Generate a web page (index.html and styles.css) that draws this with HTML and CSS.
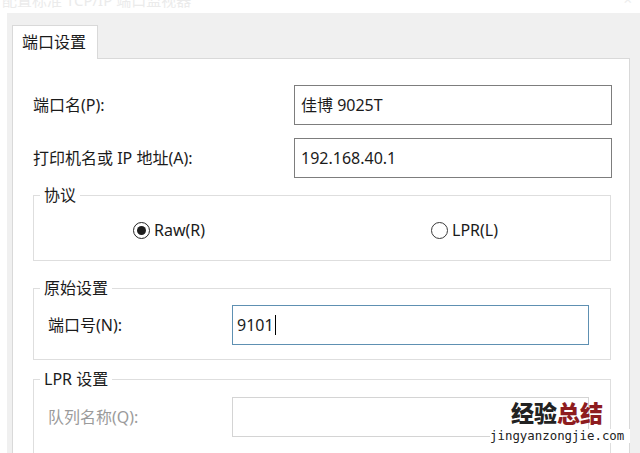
FILE: index.html
```html
<!DOCTYPE html>
<html lang="zh-CN">
<head>
<meta charset="utf-8">
<title>配置标准 TCP/IP 端口监视器</title>
<link rel="stylesheet" href="styles.css">
</head>
<body>
<div class="titlebar"><span class="title-text">配置标准 TCP/IP 端口监视器</span><span class="title-close">×</span></div>
<div class="dialog">
  <div class="tabs">
    <div class="tab active">端口设置</div>
  </div>
  <div class="panel">
    <div class="field-grid">
      <div class="label">端口名(P):</div>
      <div class="textbox">佳博 9025T</div>
      <div class="label">打印机名或 IP 地址(A):</div>
      <div class="textbox">192.168.40.1</div>
    </div>

    <fieldset class="group group-protocol">
      <legend>协议</legend>
      <div class="radio-row">
        <div class="radio-item raw"><span class="radio checked"></span><span>Raw(R)</span></div>
        <div class="radio-item"><span class="radio"></span><span>LPR(L)</span></div>
      </div>
    </fieldset>

    <fieldset class="group group-raw">
      <legend>原始设置</legend>
      <div class="group-grid">
        <div class="label">端口号(N):</div>
        <div class="textbox focused">9101<span class="caret"></span></div>
      </div>
    </fieldset>

    <fieldset class="group group-lpr">
      <legend>LPR 设置</legend>
      <div class="group-grid">
        <div class="label disabled">队列名称(Q):</div>
        <div class="textbox disabled-box"></div>
      </div>
      <div class="check-row disabled">启用了 LPR 字节计数(B)</div>
    </fieldset>
  </div>
</div>
<div class="watermark">
  <div class="wm-title"><span class="wm-dark">经验</span><span class="wm-red">总结</span></div>
  <div class="wm-url">jingyanzongjie.com</div>
</div>
</body>
</html>
```

FILE: styles.css
```css
html, body {
  margin: 0;
  padding: 0;
}
body {
  width: 640px;
  height: 453px;
  overflow: hidden;
  background: #ffffff;
  font-family: "Noto Sans", "Noto Sans CJK SC", sans-serif;
  font-size: 16px;
  color: #1b1b1b;
  position: relative;
}
.titlebar {
  height: 13px;
  overflow: hidden;
  display: flex;
  justify-content: space-between;
  color: #ebebeb;
  font-size: 15px;
  line-height: 15px;
}
.title-text {
  margin-top: -7px;
  padding-left: 2px;
}
.title-close {
  margin-top: -8px;
  margin-right: 8px;
  color: #ededed;
}
.dialog {
  margin-left: 7px;
  height: 440px;
  background: #f0f0f0;
  padding: 12px 0 0 5px;
  box-sizing: border-box;
}
.tabs {
  display: flex;
  position: relative;
  z-index: 1;
  margin-bottom: -1px;
}
.tab {
  width: 86px;
  height: 34px;
  box-sizing: border-box;
  border: 1px solid #d9d9d9;
  border-bottom: none;
  background: #ffffff;
  padding-left: 9px;
  line-height: 32px;
  font-size: 16px;
}
.panel {
  width: 618px;
  height: 420px;
  box-sizing: border-box;
  background: #ffffff;
  border: 1px solid #d9d9d9;
  padding: 26px 0 0 20px;
}
.field-grid {
  display: grid;
  grid-template-columns: 261px 318px;
  grid-auto-rows: 40px;
  row-gap: 13px;
  align-items: center;
}
.label {
  line-height: 20px;
}
.textbox {
  height: 40px;
  box-sizing: border-box;
  border: 1px solid #7d7d7d;
  background: #ffffff;
  padding-left: 6px;
  display: flex;
  align-items: center;
  line-height: 20px;
}
.group {
  margin: 7px 0 0 0;
  padding: 0;
  width: 578px;
  box-sizing: border-box;
  border: 1px solid #dedede;
  min-inline-size: 0;
}
.group legend {
  margin-left: 6px;
  padding: 0 4px;
  line-height: 20px;
  font-size: 16px;
}
.radio-row {
  display: flex;
  align-items: center;
  height: 50px;
  padding: 0 0 5px 99px;
}
.radio-item {
  display: flex;
  align-items: center;
  gap: 4px;
}
.radio-item.raw {
  width: 298px;
}
.radio {
  width: 17px;
  height: 17px;
  box-sizing: border-box;
  border: 1px solid #3a3a3a;
  border-radius: 50%;
  background: #ffffff;
  display: flex;
  align-items: center;
  justify-content: center;
}
.radio.checked {
  border: 1.5px solid #222222;
}
.radio.checked::after {
  content: "";
  width: 9px;
  height: 9px;
  border-radius: 50%;
  background: #1e1e1e;
}
.group-raw {
  margin-top: 17px;
}
.group-lpr {
  margin-top: 9px;
}
.group-grid {
  display: grid;
  grid-template-columns: 184px 357px;
  align-items: center;
  padding-left: 14px;
}
.group-raw .group-grid {
  padding-top: 7px;
  padding-bottom: 14px;
}
.group-lpr .group-grid {
  padding-top: 8px;
}
.textbox.focused {
  border-color: #5e90b2;
  padding-left: 4px;
}
.caret {
  display: inline-block;
  width: 0;
  height: 20px;
  border-left: 1px solid #000000;
  margin-left: 1px;
}
.textbox.disabled-box {
  border-color: #d4d4d4;
}
.disabled {
  color: #9b9b9b;
}
.check-row {
  padding: 15px 0 20px 14px;
  color: #c4c4c4;
}
.watermark {
  position: absolute;
  left: 490px;
  top: 397px;
  width: 140px;
}
.wm-title {
  padding-left: 21px;
  font-family: "Noto Sans CJK SC", sans-serif;
  font-weight: 900;
  font-size: 23px;
  line-height: 30px;
  letter-spacing: 0px;
}
.wm-dark {
  color: #222222;
}
.wm-red {
  color: #8e1c1f;
}
.wm-url {
  font-family: "DejaVu Sans Mono", monospace;
  font-size: 12.4px;
  line-height: 14px;
  color: #222222;
  background: #ffffff;
  margin-top: 2px;
}
```
